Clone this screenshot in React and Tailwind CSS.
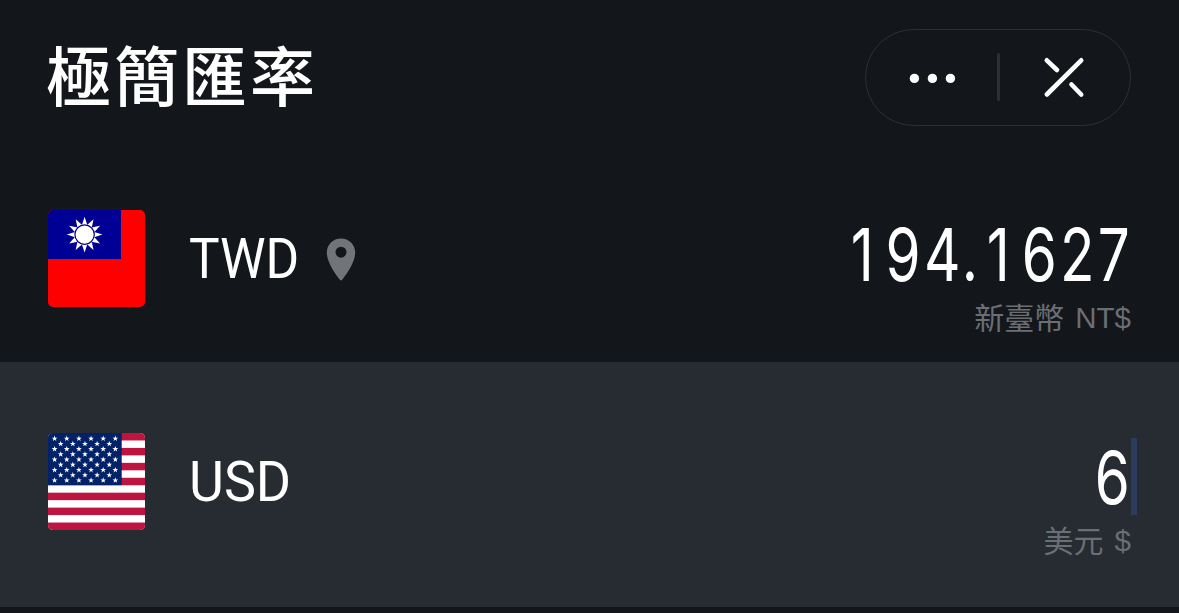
const STRIPES = [0, 2, 4, 6, 8, 10, 12];
const RAYS = [0, 30, 60, 90, 120, 150, 180, 210, 240, 270, 300, 330];

const STARS = [];
for (let row = 0; row < 9; row += 1) {
  const count = row % 2 === 0 ? 6 : 5;
  for (let col = 0; col < count; col += 1) {
    STARS.push([6.6 + col * 12.15 + (row % 2) * 6.07, 5.6 + row * 5.22]);
  }
}

function TaiwanFlag() {
  return (
    <svg viewBox="0 0 97 97" className="size-[97px] shrink-0 rounded-[5px]">
      <rect width="97" height="97" fill="#fe0000" />
      <rect width="73" height="49" fill="#000095" />
      <g transform="translate(36.6 24.6)" fill="#fff">
        {RAYS.map((angle) => (
          <path key={angle} d="M0 -17.8L2.7 -9.6H-2.7Z" transform={`rotate(${angle})`} />
        ))}
        <circle r="9.7" stroke="#000095" strokeWidth="1.2" />
      </g>
    </svg>
  );
}

function UsFlag() {
  return (
    <svg viewBox="0 0 97 97" className="size-[97px] shrink-0 rounded-[5px]">
      <rect width="97" height="97" fill="#fff" />
      {STRIPES.map((n) => (
        <rect key={n} y={(n * 97) / 13} width="97" height={97 / 13} fill="#bd1440" />
      ))}
      <rect width="73.7" height="52.2" fill="#012169" />
      {STARS.map(([x, y]) => (
        <path
          key={`${x}-${y}`}
          transform={`translate(${x} ${y}) scale(1.12)`}
          d="M0 -2.7L.65 -.83L2.57 -.83L1.03 .32L1.6 2.2L0 1.05L-1.6 2.2L-1.03 .32L-2.57 -.83L-.65 -.83Z"
          fill="#fff"
        />
      ))}
    </svg>
  );
}

function Pin() {
  return (
    <svg viewBox="0 0 30 43" className="mt-[2px] ml-[30px] h-[43px] w-[30px]">
      <path
        fillRule="evenodd"
        fill="#717478"
        d="M15 .5C6.9 .5 .8 6.8 .8 14.5C.8 24.8 10.2 37 13.8 41.8Q15 43.2 16.2 41.8C19.8 37 29.2 24.8 29.2 14.5C29.2 6.8 23.1 .5 15 .5ZM15 8.7A5.5 5.5 0 1 1 15 19.7A5.5 5.5 0 1 1 15 8.7Z"
      />
    </svg>
  );
}

function Code({ children, fit }) {
  return (
    <div className="mt-[2px] ml-[44px] h-[60px] w-[107px]">
      <span className={`inline-block origin-left text-[55.5px] leading-[60px] whitespace-nowrap ${fit}`}>
        {children}
      </span>
    </div>
  );
}

function Amount({ value, label, symbol }) {
  return (
    <div className="ml-auto flex flex-col items-end">
      <div className="flex h-[78px] items-center">
        <span className="-mr-[2px] inline-block origin-right scale-x-[0.78] font-['Inter',sans-serif] text-[72.5px] leading-[78px] font-normal tracking-[4.2px] whitespace-nowrap">
          {value.split('').map((char, i) => (
            <span key={i} className={char === '1' ? 'mr-[11px] ml-[7px]' : ''}>
              {char}
            </span>
          ))}
        </span>
      </div>
      <div className="mt-[4px] flex gap-[11px] text-[30px] leading-[40px] whitespace-nowrap text-[#6b6e73]">
        <span className="-mt-[2px] font-['Noto_Sans_CJK_TC',sans-serif]">{label}</span>
        <span className="font-['Liberation_Sans',sans-serif] text-[29.5px]">{symbol}</span>
      </div>
    </div>
  );
}

export default function App() {
  return (
    <main className="flex h-[613px] w-[1179px] flex-col overflow-hidden bg-[#13171b] font-['Roboto','Noto_Sans_CJK_TC',sans-serif] text-white">
      <header className="flex h-[154px] items-start justify-between pr-[48px] pl-[46px]">
        <h1 className="mt-[32px] text-[65px] leading-[94px] font-medium tracking-[3px]">極簡匯率</h1>
        <div className="mt-[29px] flex h-[97px] w-[266px] items-center rounded-full border border-[#2c2f34]">
          <button aria-label="More" className="flex flex-1 justify-center pl-[2px]">
            <svg viewBox="0 0 48 12" className="h-[12px] w-[48px]" fill="#fff">
              <circle cx="6.4" cy="6.4" r="4.7" />
              <circle cx="24.4" cy="6.4" r="4.7" />
              <circle cx="42.4" cy="6.4" r="4.7" />
            </svg>
          </button>
          <div className="mb-[2px] h-[48px] w-[3px] rounded-full bg-[#2c2f34]" />
          <button aria-label="Close" className="flex flex-1 justify-center pr-[2px]">
            <svg viewBox="0 0 42 42" className="h-[42px] w-[42px]" fill="none" stroke="#fff" strokeWidth="4.6" strokeLinecap="round">
              <path d="M38.2 3.3L3.8 37.5M3.8 3.3L14 13M28.5 27.5L38.2 37.5" />
            </svg>
          </button>
        </div>
      </header>
      <section className="flex h-[208px] items-start px-[48px]">
        <div className="mt-[56px] flex h-[97px] items-center">
          <TaiwanFlag />
          <Code fit="scale-x-[0.925]">TWD</Code>
          <Pin />
        </div>
        <div className="mt-[62px] ml-auto">
          <Amount value="194.1627" label="新臺幣" symbol="NT$" />
        </div>
      </section>
      <section className="flex h-[245px] shrink-0 items-start bg-[#272b32] pr-[42px] pl-[48px]">
        <div className="mt-[71px] flex h-[97px] items-center">
          <UsFlag />
          <Code fit="scale-x-[0.97]">USD</Code>
        </div>
        <div className="mt-[77px] ml-auto">
          <Amount value="6" label="美元" symbol="$" />
        </div>
        <div className="mt-[76px] h-[77px] w-[6px] bg-[#2c3c5f]" />
      </section>
    </main>
  );
}
